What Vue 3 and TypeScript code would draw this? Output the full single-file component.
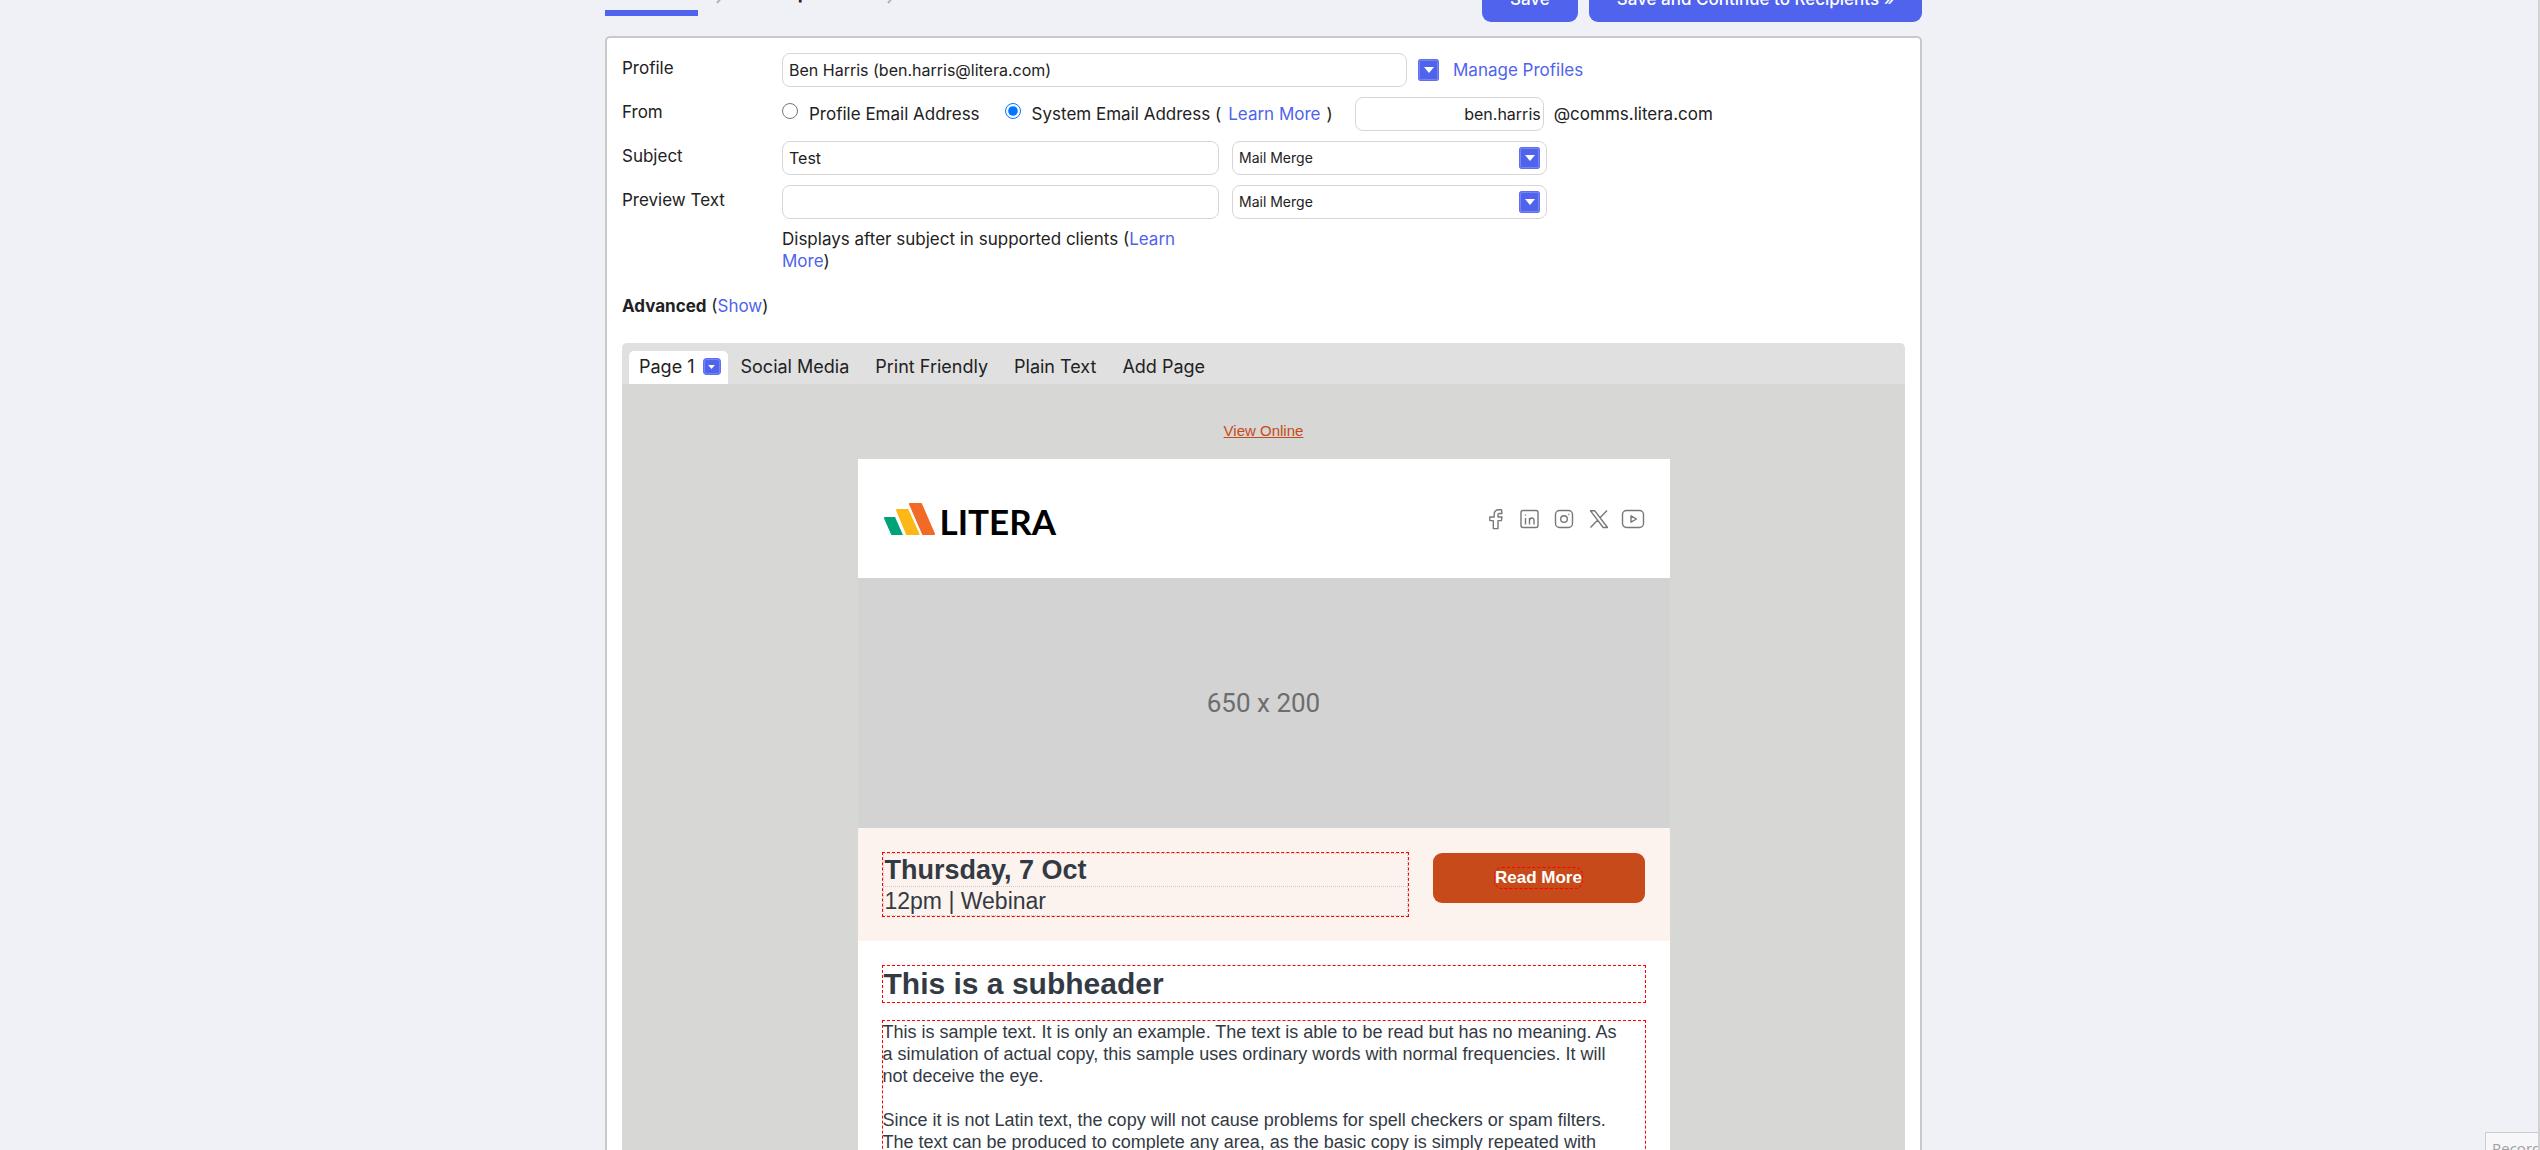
<script setup lang="ts">
import { ref } from 'vue'

const profile = ref('Ben Harris (ben.harris@litera.com)')
const sender = ref('system')
const mailbox = ref('ben.harris')
const subject = ref('Test')
const previewText = ref('')
const pages = ['Social Media', 'Print Friendly', 'Plain Text', 'Add Page']
</script>

<template>
  <div class="app">
    <div class="shell">
      <header class="topbar">
        <nav class="steps" aria-label="Steps">
          <span class="step current"></span>
          <svg class="chevron" viewBox="0 0 8 16" aria-hidden="true"><path d="M1 1l6 7-6 7" /></svg>
          <a class="step next" href="#">Recipients</a>
          <svg class="chevron" viewBox="0 0 8 16" aria-hidden="true"><path d="M1 1l6 7-6 7" /></svg>
        </nav>
        <div class="actions">
          <button type="button" class="primary">Save</button>
          <button type="button" class="primary">Save and Continue to Recipients »</button>
        </div>
      </header>

      <main class="card">
        <div class="row">
          <label class="name" for="profile">Profile</label>
          <div class="controls">
            <input id="profile" v-model="profile" class="field profile" type="text" />
            <button type="button" class="arrow" aria-label="Choose profile">
              <svg viewBox="0 0 10 6"><path d="M0 0h10L5 6z" /></svg>
            </button>
            <a href="#" class="manage">Manage Profiles</a>
          </div>
        </div>

        <div class="row">
          <span class="name">From</span>
          <div class="controls">
            <input id="from-profile" v-model="sender" type="radio" value="profile" />
            <label for="from-profile" class="option first">Profile Email Address</label>
            <input id="from-system" v-model="sender" type="radio" value="system" />
            <label for="from-system" class="option">System Email Address (</label>
            <a href="#" class="learn">Learn More</a>
            <span>)</span>
            <input v-model="mailbox" class="field mailbox" type="text" aria-label="Mailbox name" />
            <span class="domain">@comms.litera.com</span>
          </div>
        </div>

        <div class="row">
          <label class="name" for="subject">Subject</label>
          <div class="controls">
            <input id="subject" v-model="subject" class="field wide" type="text" />
            <div class="merge">
              <select class="field" aria-label="Subject mail merge"><option>Mail Merge</option></select>
              <span class="arrow"><svg viewBox="0 0 10 6"><path d="M0 0h10L5 6z" /></svg></span>
            </div>
          </div>
        </div>

        <div class="row">
          <label class="name" for="preview">Preview Text</label>
          <div class="controls">
            <input id="preview" v-model="previewText" class="field wide" type="text" />
            <div class="merge">
              <select class="field" aria-label="Preview text mail merge"><option>Mail Merge</option></select>
              <span class="arrow"><svg viewBox="0 0 10 6"><path d="M0 0h10L5 6z" /></svg></span>
            </div>
          </div>
        </div>

        <p class="hint">Displays after subject in supported clients (<a href="#">Learn More</a>)</p>
        <p class="advanced"><strong>Advanced</strong> (<a href="#">Show</a>)</p>

        <div class="tabs">
          <div class="tab active">
            Page 1
            <button type="button" class="arrow small" aria-label="Page menu">
              <svg viewBox="0 0 10 6"><path d="M0 0h10L5 6z" /></svg>
            </button>
          </div>
          <a v-for="page in pages" :key="page" href="#" class="tab">{{ page }}</a>
        </div>

        <section class="canvas">
          <a href="#" class="online">View Online</a>
          <article class="email">
            <div class="brand">
              <div class="logo">
                <svg viewBox="0 0 52 34" aria-hidden="true">
                  <path fill="#00a278" stroke="#00a278" d="M2 16h11l7 16H9z" />
                  <path fill="#fdb817" stroke="#fdb817" d="M14 8h11l11 24H24z" />
                  <path fill="#f26a26" stroke="#f26a26" d="M27 2h11l13 30H40z" />
                  <path class="gap" d="M12.500 13.500L21.500 34M25.500 5L38.500 34" />
                </svg>
                <span>LITERA</span>
              </div>
              <div class="social">
                <a href="#" aria-label="Facebook"><svg viewBox="0 0 24 24"><path d="M16.500 2.800h-2.500c-3.300 0-4.800 1.800-4.800 4.800v2.400H4.800v3.600h3.500v8h4.700v-8h3.400l.600-3.600h-4V8c0-1 .500-1.500 1.600-1.500h2.400z" /></svg></a>
                <a href="#" aria-label="LinkedIn"><svg viewBox="0 0 24 24"><rect x="2" y="3.500" width="17" height="17" rx="2" /><path d="M6.500 11v6.500M6.500 7.500v1M10.500 17.500V11M10.500 14c0-4 4.500-4 4.500-.500v4" /></svg></a>
                <a href="#" aria-label="Instagram"><svg viewBox="0 0 24 24"><rect x="2.500" y="3.500" width="17" height="17" rx="4" /><circle cx="11" cy="12" r="3.300" /><path d="M15.300 7.500h1" /></svg></a>
                <a href="#" aria-label="X"><svg viewBox="0 0 24 24"><path d="M3.500 3.800h4.300l12.700 16.700h-4.300zM20 3.500l-7 7.200M10.800 13l-7.300 7.500" /></svg></a>
                <a href="#" aria-label="YouTube"><svg viewBox="0 0 24 24"><rect x="1.500" y="3.500" width="21" height="17" rx="4" /><path d="M10 8.800v6.400l5.500-3.200z" /></svg></a>
              </div>
            </div>

            <div class="banner">650 x 200</div>

            <div class="event">
              <div class="editable when">
                <h2>Thursday, 7 Oct</h2>
                <p>12pm | Webinar</p>
              </div>
              <a href="#" class="cta"><span>Read More</span></a>
            </div>

            <div class="copy">
              <h1 class="editable">This is a subheader</h1>
              <div class="editable body">
                <p>This is sample text. It is only an example. The text is able to be read but has no meaning. As a simulation of actual copy, this sample uses ordinary words with normal frequencies. It will not deceive the eye.</p>
                <p>Since it is not Latin text, the copy will not cause problems for spell checkers or spam filters. The text can be produced to complete any area, as the basic copy is simply repeated with</p>
              </div>
            </div>
          </article>
        </section>
      </main>
    </div>
    <div class="recorder">Record</div>
    <div class="scroll-edge"></div>
  </div>
</template>

<style>
html,
body {
  background: #f0f1f6;
}
</style>

<style scoped>
* {
  box-sizing: border-box;
}
.app {
  height: 100vh;
  overflow: hidden;
  padding-right: 13px;
  background: #f0f1f6;
  color: #222;
  font: 17px/22px Inter, "Liberation Sans", sans-serif;
}
.shell {
  max-width: 1317px;
  margin: 0 auto;
}
a {
  color: #4f63ec;
  text-decoration: none;
}
p,
h1,
h2 {
  margin: 0;
}
.topbar {
  display: flex;
  justify-content: space-between;
  align-items: flex-end;
  height: 22px;
  overflow: hidden;
}
.steps {
  display: flex;
  align-items: flex-end;
  height: 22px;
}
.step {
  margin-bottom: 18px;
  color: #222;
  font-size: 18px;
  font-weight: 700;
}
.step.next {
  margin-right: 16px;
}
.step.current {
  width: 93px;
  height: 6px;
  margin-bottom: 6px;
  background: #4f63ec;
}
.chevron {
  width: 8px;
  height: 16px;
  margin: 0 36px 18px 18px;
  fill: none;
  stroke: #b4b4b8;
  stroke-width: 2;
}
.actions {
  display: flex;
  gap: 11px;
}
.primary {
  height: 46px;
  padding: 0 28px;
  border: 0;
  border-radius: 9px;
  background: #4f63ec;
  color: #fff;
  font: 500 17px/22px Inter, sans-serif;
}
.card {
  margin-top: 14px;
  padding: 15px 15px 0;
  border: 2px solid #c9c9c9;
  border-radius: 5px;
  background: #fff;
}
.row {
  display: grid;
  grid-template-columns: 160px 1fr;
  align-items: center;
  height: 34px;
  margin-bottom: 10px;
}
.name {
  padding-bottom: 4px;
}
.controls {
  display: flex;
  align-items: center;
}
.field {
  height: 34px;
  padding: 0 6px;
  border: 1px solid #d6d6d6;
  border-radius: 8px;
  background: #fff;
  color: #222;
  font: 16px/22px Inter, sans-serif;
}
.profile {
  width: 625px;
  margin-right: 11px;
}
.wide {
  width: 437px;
  margin-right: 13px;
}
.mailbox {
  width: 189px;
  margin: 0 10px 0 22px;
  padding: 0 2px;
  text-align: right;
}
input[type="radio"] {
  width: 16px;
  height: 16px;
  margin: 0 11px 6px 0;
}
.option.first {
  margin-right: 25px;
}
.learn {
  margin: 0 6px 0 7px;
}
.arrow {
  display: flex;
  align-items: center;
  justify-content: center;
  width: 21px;
  height: 22px;
  padding: 0;
  border: 2px solid #7484f0;
  outline: 1px solid #5f70ee;
  outline-offset: -1px;
  border-radius: 3px;
  background: #4f63ec;
}
.arrow svg {
  width: 10px;
  height: 6px;
  fill: #fff;
}
.arrow.small {
  width: 18px;
  height: 17px;
  border-radius: 4px;
}
.arrow.small svg {
  width: 7px;
  height: 4px;
}
.manage {
  margin-left: 14px;
}
.merge {
  position: relative;
  width: 315px;
}
.merge select {
  width: 100%;
  appearance: none;
  font-size: 14px;
}
.merge .arrow {
  position: absolute;
  top: 6px;
  right: 7px;
  pointer-events: none;
}
.hint {
  width: 436px;
  margin: -1px 0 0 160px;
}
.advanced {
  margin-top: 23px;
}
.tabs {
  display: flex;
  height: 41px;
  margin-top: 26px;
  padding: 8px 7px 0;
  border-radius: 5px 5px 0 0;
  background: #e0e0e0;
}
.tab {
  display: flex;
  align-items: center;
  height: 31px;
  padding: 0 13px;
  color: #222;
  font-size: 18px;
  line-height: 22px;
}
.tab.active {
  gap: 8px;
  height: 33px;
  padding: 0 7px 2px 10px;
  border-radius: 5px 5px 0 0;
  background: #fff;
}
.canvas {
  display: flex;
  flex-direction: column;
  align-items: center;
  padding-top: 36px;
  background: #d7d7d5;
  font-family: "Liberation Sans", Arial, sans-serif;
}
.online {
  margin-bottom: 17px;
  color: #c8491a;
  font-size: 15px;
  text-decoration: underline;
}
.email {
  width: 100%;
  max-width: 812px;
  background: #fff;
  color: #333a44;
}
.brand {
  display: flex;
  align-items: center;
  justify-content: space-between;
  height: 119px;
  padding: 0 25px;
}
.logo {
  display: flex;
  align-items: center;
  gap: 5px;
  color: #000;
  font: 700 35px/36px Lato, sans-serif;
}
.logo svg {
  width: 52px;
  height: 34px;
  stroke-width: 2;
  stroke-linejoin: round;
}
.logo .gap {
  fill: none;
  stroke: #fff;
}
.logo span {
  padding-top: 4px;
}
.social {
  display: flex;
  gap: 10px;
}
.social a,
.social svg {
  display: block;
  width: 24px;
  height: 24px;
}
.social svg {
  fill: none;
  stroke: #77787c;
  stroke-width: 1.4;
  stroke-linejoin: round;
}
.banner {
  display: grid;
  place-items: center;
  height: 250px;
  background: #d3d3d3;
  color: #6d6d6d;
  font: 26px/30px Roboto, sans-serif;
}
.event {
  display: flex;
  gap: 24px;
  align-items: flex-start;
  padding: 24px 25px 24px 24px;
  background: #fdf3ee;
}
.editable {
  border: 1px dashed #f00;
}
.when {
  flex: 1;
  font-size: 23px;
}
.when h2,
.when p {
  padding: 0 1px;
  border: 1px dotted #d0cac8;
}
.when h2 {
  border-bottom: 0;
  font-size: 27px;
  line-height: 32px;
}
.when p {
  line-height: 28px;
}
.cta {
  display: grid;
  place-items: center;
  width: 212px;
  height: 50px;
  margin-top: 1px;
  border-radius: 9px;
  background: #c64a1a;
  color: #fff;
  font-size: 17px;
  font-weight: 700;
}
.cta span {
  border: 1px dashed #f00;
  border-radius: 8px;
  line-height: 20px;
}
.copy {
  padding: 24px 24px 60px;
}
.copy h1 {
  margin-bottom: 17px;
  padding-left: 1px;
  font-size: 30px;
  line-height: 36px;
}
.body {
  padding: 0 20px 40px 0;
  font-size: 18px;
}
.body p + p {
  margin-top: 22px;
}
.recorder {
  position: fixed;
  right: -20px;
  bottom: -12px;
  width: 75px;
  height: 30px;
  padding: 4px 6px;
  border: 1px solid #ccc;
  background: #f7f7f9;
  color: #a0a0a4;
  font: 15px/22px "Open Sans", sans-serif;
}
.scroll-edge {
  position: fixed;
  top: 0;
  right: 0;
  bottom: 0;
  width: 2px;
  background: #d2d2d4;
}
</style>
